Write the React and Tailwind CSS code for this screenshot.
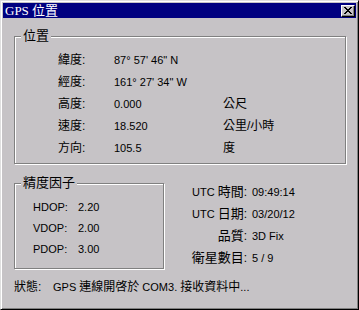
const font = { fontFamily: '"Liberation Sans", "Noto Sans CJK TC", sans-serif' }

function Group({ label, className, children }) {
  return (
    <div className={`relative border border-[#808080] shadow-[inset_1px_1px_0_#fff,1px_1px_0_#fff] ${className}`}>
      <span className="absolute -top-[9px] left-[6px] bg-[#c6c3c6] px-[2px] text-[13px] leading-[16px]">{label}</span>
      {children}
    </div>
  )
}

const position = [
  ['緯度:', '87° 57\' 46" N', ''],
  ['經度:', '161° 27\' 34" W', ''],
  ['高度:', '0.000', '公尺'],
  ['速度:', '18.520', '公里/小時'],
  ['方向:', '105.5', '度'],
]

const dop = [
  ['HDOP:', '2.20'],
  ['VDOP:', '2.00'],
  ['PDOP:', '3.00'],
]

const info = [
  ['UTC ', '時間', '09:49:14'],
  ['UTC ', '日期', '03/20/12'],
  ['', '品質', '3D Fix'],
  ['', '衛星數目', '5 / 9'],
]

export default function App() {
  return (
    <div
      style={font}
      className="w-[359px] h-[310px] bg-[#c6c3c6] border border-t-[#dfdfdf] border-l-[#dfdfdf] border-r-black border-b-black shadow-[inset_1px_1px_0_#fff,inset_-1px_-1px_0_#808080] p-[2px] text-[12px] text-black select-none"
    >
      {/* title bar */}
      <div className="h-[15px] bg-[#000080] flex items-center justify-between pl-[2px] pr-[1px]">
        <span className="text-white text-[13px] leading-[15px]" style={{ fontFamily: '"Liberation Serif", "Noto Sans CJK TC", serif' }}>
          GPS 位置
        </span>
        <div className="w-[14px] h-[12px] bg-[#c6c3c6] border border-t-white border-l-white border-r-black border-b-black shadow-[inset_-1px_-1px_0_#808080] flex items-center justify-center">
          <svg width="8" height="7" viewBox="0 0 8 7" shapeRendering="crispEdges">
            <path d="M0 0h2v1h-2zM6 0h2v1h-2zM1 1h2v1h-2zM5 1h2v1h-2zM2 2h4v1h-4zM3 3h2v1h-2zM2 4h4v1h-4zM1 5h2v1h-2zM5 5h2v1h-2zM0 6h2v1h-2zM6 6h2v1h-2z" fill="#000" />
          </svg>
        </div>
      </div>

      <div className="px-[11px]">
        <Group label="位置" className="mt-[18px] w-[332px] h-[128px] pt-[12px] pl-[43px]">
          {position.map(([k, v, u]) => (
            <div key={k} className="flex h-[22px] items-center">
              <span className="w-[56px]">{k}</span>
              <span className="w-[109px] text-[11px]">{v}</span>
              <span>{u}</span>
            </div>
          ))}
        </Group>

        <div className="flex items-start mt-[17px]">
          <Group label="精度因子" className="mt-[2px] w-[150px] h-[86px] pt-[13px] pl-[18px]">
            {dop.map(([k, v]) => (
              <div key={k} className="flex h-[21px] items-center text-[11px]">
                <span className="w-[45px]">{k}</span>
                <span>{v}</span>
              </div>
            ))}
          </Group>

          <div className="ml-[14px]">
            {info.map(([pre, k, v]) => (
              <div key={k} className="flex h-[22px] items-center">
                <span className="w-[69px] text-right whitespace-nowrap">
                  <span className="text-[11px]">{pre}</span>
                  <span className="text-[13px]">{k}</span>:
                </span>
                <span className="ml-[5px] text-[11px]">{v}</span>
              </div>
            ))}
          </div>
        </div>

        <div className="flex h-[22px] items-center mt-[7px]">
          <span className="w-[39px]">狀態:</span>
          <span>
            <span className="text-[11px]">GPS </span>連線開啓於<span className="text-[11px]"> COM3. </span>接收資料中<span className="text-[11px]">...</span>
          </span>
        </div>
      </div>
    </div>
  )
}
